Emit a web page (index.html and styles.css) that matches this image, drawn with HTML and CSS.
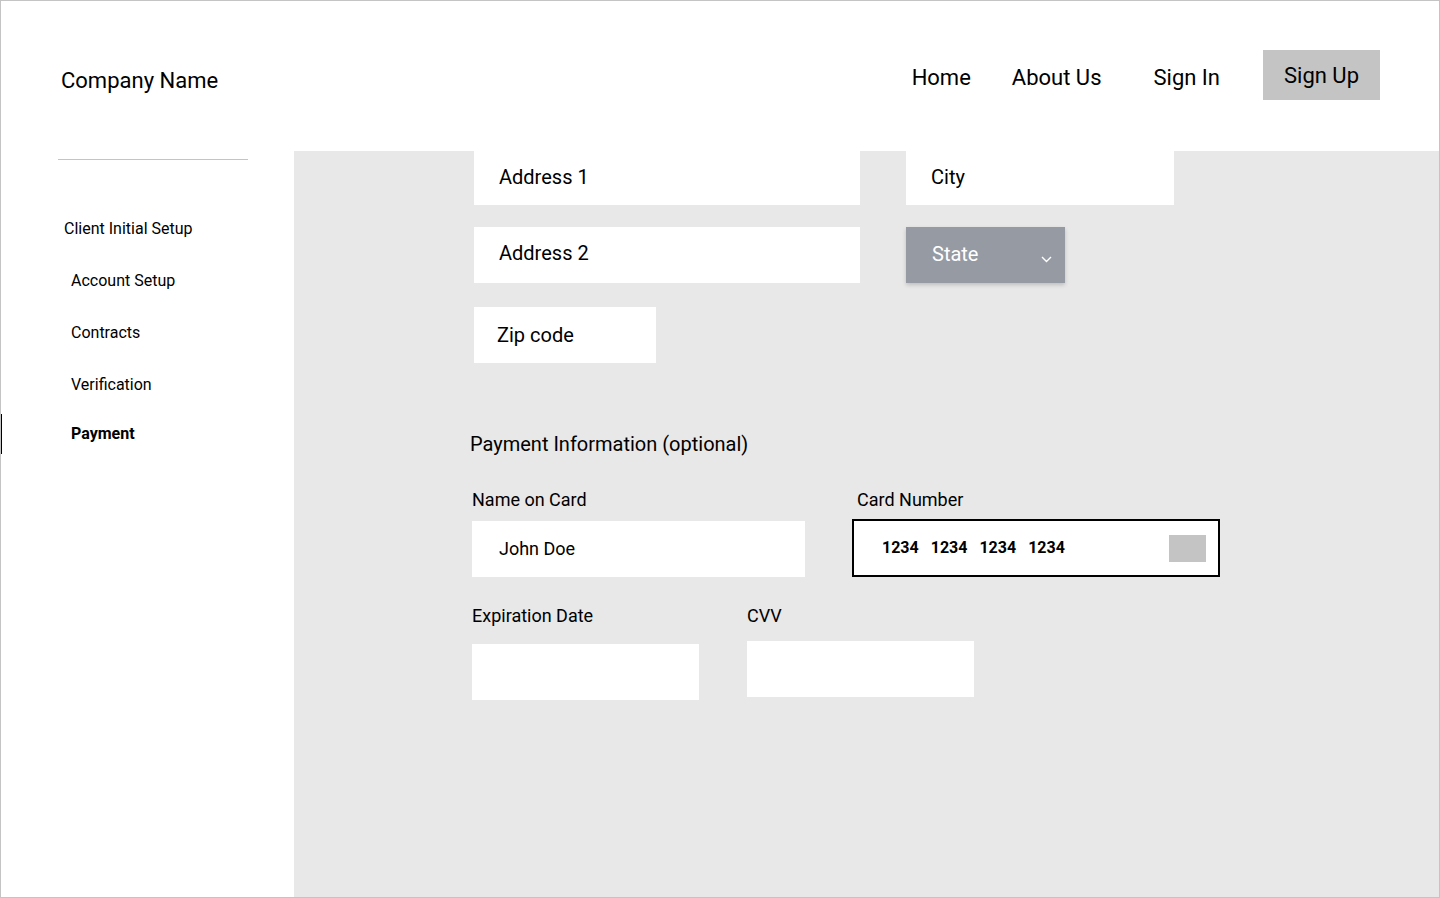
FILE: index.html
```html
<!DOCTYPE html>
<html lang="en">
<head>
<meta charset="utf-8">
<title>Payment</title>
<link rel="stylesheet" href="styles.css">
</head>
<body>
<div class="frame">
  <header class="topbar">
    <div class="brand">Company Name</div>
    <nav class="nav">
      <a class="nav-link nav-home">Home</a>
      <a class="nav-link nav-about">About Us</a>
      <a class="nav-link nav-signin">Sign In</a>
      <a class="nav-btn">Sign Up</a>
    </nav>
  </header>
  <div class="body-row">
    <aside class="sidebar">
      <div class="divider"></div>
      <ul class="steps">
        <li class="step step-root">Client Initial Setup</li>
        <li class="step">Account Setup</li>
        <li class="step">Contracts</li>
        <li class="step">Verification</li>
        <li class="step step-active">Payment</li>
      </ul>
    </aside>
    <main class="main">
      <div class="row row-1">
        <div class="field field-addr">Address 1</div>
        <div class="field field-city">City</div>
      </div>
      <div class="row row-2">
        <div class="field field-addr field-tall">Address 2</div>
        <div class="select">
          <span>State</span>
          <svg class="chev" width="11" height="7" viewBox="0 0 11 7"><polyline points="1,1 5.5,5.5 10,1" fill="none" stroke="#ffffff" stroke-width="1.4"/></svg>
        </div>
      </div>
      <div class="row row-3">
        <div class="field field-zip">Zip code</div>
      </div>
      <h2 class="section-title">Payment Information (optional)</h2>
      <div class="pay-row">
        <div class="col col-name">
          <div class="label">Name on Card</div>
          <div class="field field-name">John Doe</div>
        </div>
        <div class="col col-card">
          <div class="label label-card">Card Number</div>
          <div class="card-field">
            <span class="num">1234</span><span class="num">1234</span><span class="num">1234</span><span class="num">1234</span>
            <span class="card-logo"></span>
          </div>
        </div>
      </div>
      <div class="pay-row pay-row-2">
        <div class="col col-exp">
          <div class="label label-exp">Expiration Date</div>
          <div class="blank blank-exp"></div>
        </div>
        <div class="col col-cvv">
          <div class="label label-cvv">CVV</div>
          <div class="blank blank-cvv"></div>
        </div>
      </div>
    </main>
  </div>
</div>
</body>
</html>
```

FILE: styles.css
```css
* { box-sizing: border-box; }
html, body { margin: 0; padding: 0; }
body {
  font-family: Roboto, "Liberation Sans", sans-serif;
  color: #000;
  background: #fff;
}
.frame {
  width: 1440px;
  height: 898px;
  border: 1px solid #c4c4c4;
  display: flex;
  flex-direction: column;
  overflow: hidden;
}
.topbar {
  height: 150px;
  display: flex;
  align-items: flex-start;
  justify-content: space-between;
  flex-shrink: 0;
}
.brand {
  font-size: 22px;
  line-height: 26px;
  margin-left: 60px;
  margin-top: 67px;
}
.nav {
  display: flex;
  align-items: flex-start;
  margin-top: 49px;
  margin-right: 59px;
}
.nav-link {
  font-size: 22px;
  line-height: 26px;
  margin-top: 15px;
  color: #000;
}
.nav-about { margin-left: 41px; }
.nav-signin { margin-left: 52px; }
.nav-btn {
  margin-left: 43px;
  width: 117px;
  height: 50px;
  background: #c4c4c4;
  font-size: 22px;
  line-height: 26px;
  padding: 13px 0 0 21px;
  color: #000;
}
.body-row {
  flex: 1;
  display: flex;
}
.sidebar {
  width: 293px;
  flex-shrink: 0;
}
.divider {
  margin: 8px 0 0 57px;
  width: 190px;
  height: 1px;
  background: #c4c4c4;
}
.steps {
  list-style: none;
  margin: 0;
  padding: 0;
}
.step {
  font-size: 16px;
  line-height: 18px;
  margin-left: 70px;
  margin-top: 34px;
}
.step-root {
  margin-left: 63px;
  margin-top: 60px;
}
.step-active {
  font-weight: 700;
  margin-left: 0;
  padding-left: 69px;
  margin-top: 20px;
  height: 40px;
  line-height: 40px;
  border-left: 1px solid #000;
}
.main {
  flex: 1;
  background: #e8e8e8;
  padding-left: 180px;
}
.row {
  display: flex;
  align-items: flex-start;
}
.row-2 { margin-top: 22px; }
.row-3 { margin-top: 24px; }
.field {
  background: #fff;
  font-size: 20px;
  line-height: 24px;
  padding-left: 25px;
  display: flex;
  align-items: center;
}
.field-addr {
  width: 386px;
  height: 54px;
  padding-bottom: 2px;
}
.field-tall { height: 56px; padding-bottom: 4px; }
.field-city {
  margin-left: 46px;
  width: 268px;
  height: 54px;
  padding-bottom: 2px;
}
.field-zip {
  width: 182px;
  height: 56px;
  padding-left: 23px;
}
.select {
  margin-left: 46px;
  width: 159px;
  height: 56px;
  background: #959aa3;
  color: #fff;
  font-size: 20px;
  line-height: 24px;
  padding: 0 13px 2px 26px;
  display: flex;
  align-items: center;
  justify-content: space-between;
  box-shadow: 0 2px 4px rgba(0, 0, 0, 0.18);
}
.chev { margin-top: 10px; }
.section-title {
  font-size: 20px;
  line-height: 24px;
  font-weight: 400;
  margin: 69px 0 0 -4px;
}
.pay-row {
  display: flex;
  align-items: flex-start;
  margin-top: 34px;
  margin-left: -2px;
}
.label {
  font-size: 18px;
  line-height: 20px;
}
.col-name { width: 333px; }
.col-name .label { margin-bottom: 11px; }
.field-name {
  height: 56px;
  font-size: 18px;
  line-height: 20px;
  padding-left: 27px;
}
.col-card { margin-left: 47px; }
.label-card { margin-left: 5px; margin-bottom: 9px; }
.card-field {
  width: 368px;
  height: 58px;
  background: #fff;
  border: 2px solid #000;
  display: flex;
  align-items: center;
  padding-left: 28px;
  padding-right: 12px;
  padding-bottom: 1px;
}
.num {
  font-size: 16px;
  font-weight: 700;
  margin-right: 12px;
}
.card-logo {
  margin-left: auto;
  margin-top: 1px;
  width: 37px;
  height: 27px;
  background: #c4c4c4;
}
.pay-row-2 { margin-top: 29px; }
.col-exp { width: 227px; }
.col-cvv { margin-left: 48px; width: 227px; }
.label-exp { margin-bottom: 18px; }
.label-cvv { margin-bottom: 15px; }
.blank {
  background: #fff;
  height: 56px;
}
```
